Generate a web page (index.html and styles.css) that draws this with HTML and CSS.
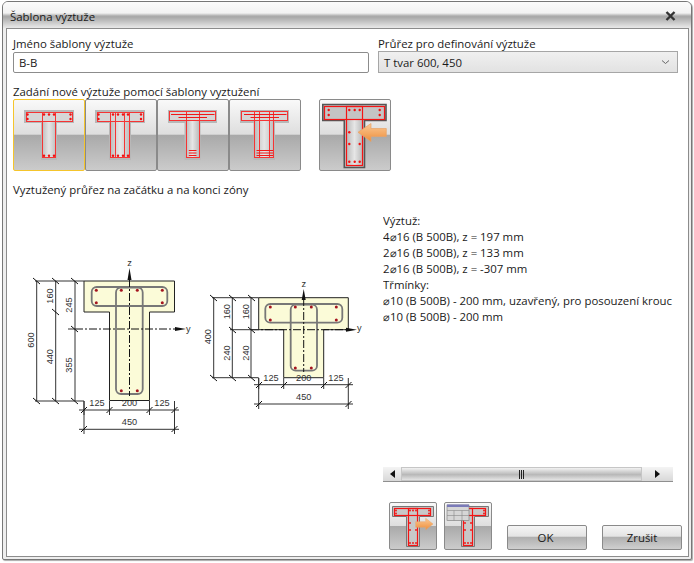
FILE: index.html
```html
<!DOCTYPE html>
<html lang="cs">
<head>
<meta charset="utf-8">
<title>Šablona výztuže</title>
<link rel="stylesheet" href="styles.css">
</head>
<body>
<svg class="defs" width="0" height="0" aria-hidden="true">
  <defs>
    <linearGradient id="web" x1="0" x2="1" y1="0" y2="0">
      <stop offset="0" stop-color="#bdbdbd"/><stop offset=".5" stop-color="#e6e6e6"/><stop offset="1" stop-color="#bdbdbd"/>
    </linearGradient>
    <linearGradient id="arrow" x1="0" x2="0" y1="0" y2="1">
      <stop offset="0" stop-color="#fbc995"/><stop offset="1" stop-color="#ee8f3c"/>
    </linearGradient>
  </defs>
</svg>
<div class="window">
  <header class="titlebar">
    <span class="title">Šablona výztuže</span>
    <svg class="close" width="11" height="10" viewBox="0 0 11 10"><path d="M1.5 1 9.5 9M9.5 1 1.5 9" stroke="#333" stroke-width="2.4" fill="none"/></svg>
  </header>
  <main class="panel">
    <div class="fields">
      <label class="field"><span class="label">Jméno šablony výztuže</span><span class="input">B-B</span></label>
      <label class="field"><span class="label">Průřez pro definování výztuže</span>
        <span class="select">T tvar 600, 450
          <svg width="9" height="6" viewBox="0 0 9 6"><path d="M1 1.5 4.5 4.5 8 1.5" stroke="#666" fill="none"/></svg>
        </span></label>
    </div>
    <div class="label new-label">Zadání nové výztuže pomocí šablony vyztužení</div>
    <div class="templates">
      <div class="group">
        <button class="icon big selected">
          <svg viewBox="0 0 72 72">
            <path class="halo" d="M11 11H61V24H44V61H28V24H11Z"/><rect class="flangefill" x="13" y="13" width="46" height="9"/><rect class="webfill" x="29" y="22" width="14" height="37"/>
            <g class="rebar"><rect x="13.500" y="13.500" width="46" height="9"/><rect x="29.500" y="13.500" width="13" height="45"/></g>
            <g class="dots"><circle cx="14.500" cy="15.500" r="1.200"/><circle cx="14.500" cy="20" r="1.200"/><circle cx="57.500" cy="15.500" r="1.200"/><circle cx="57.500" cy="20" r="1.200"/><circle cx="31" cy="15.500" r="1.200"/><circle cx="36" cy="15.500" r="1.200"/><circle cx="41" cy="15.500" r="1.200"/><circle cx="31" cy="56.700" r="1.200"/><circle cx="36" cy="56.700" r="1.200"/><circle cx="41" cy="56.700" r="1.200"/></g>
          </svg>
        </button>
        <button class="icon big">
          <svg viewBox="0 0 72 72">
            <path class="halo" d="M10 11H60V24H46V61H24V24H10Z"/><rect class="flangefill" x="12" y="13" width="46" height="9"/><rect class="webfill" x="25" y="22" width="20" height="37"/>
            <g class="rebar"><rect x="12.500" y="13.500" width="46" height="9"/><rect x="25.500" y="13.500" width="19" height="45"/><path d="M30.500 13.500V58.500M39.500 13.500V58.500"/></g>
            <g class="dots"><circle cx="13.500" cy="15.500" r="1.200"/><circle cx="13.500" cy="20" r="1.200"/><circle cx="56" cy="15.500" r="1.200"/><circle cx="56" cy="20" r="1.200"/><circle cx="28" cy="15.500" r="1.200"/><circle cx="33" cy="15.500" r="1.200"/><circle cx="38" cy="15.500" r="1.200"/><circle cx="43" cy="15.500" r="1.200"/><circle cx="28" cy="56.700" r="1.200"/><circle cx="33" cy="56.700" r="1.200"/><circle cx="38" cy="56.700" r="1.200"/><circle cx="43" cy="56.700" r="1.200"/></g>
          </svg>
        </button>
        <button class="icon big">
          <svg viewBox="0 0 72 72">
            <path class="halo" d="M11 11H60V24H43.500V61H27.500V24H11Z"/><rect class="flangefill" x="13" y="13" width="45" height="8"/><rect class="webfill" x="29" y="21" width="13" height="38"/>
            <g class="rebar"><rect x="12.500" y="12.500" width="46" height="9"/><rect x="29.500" y="12.500" width="13" height="46"/></g>
            <path class="bar" d="M14 15.500H57.500M21.500 18.500H50M31.800 51.500H39.500M31.800 54H39.500M31.800 56.500H39.500"/>
          </svg>
        </button>
        <button class="icon big">
          <svg viewBox="0 0 72 72">
            <path class="halo" d="M11 11H60V24H46V61H24.500V24H11Z"/><rect class="flangefill" x="13" y="13" width="45" height="8"/><rect class="webfill" x="25.700" y="21" width="19" height="38"/>
            <g class="rebar"><rect x="12.500" y="12.500" width="46" height="9"/><rect x="25.500" y="12.500" width="19" height="46"/><path d="M30.500 12.500V58.500M40.500 12.500V58.500"/></g>
            <path class="bar" d="M15 15.500H57.500M21.500 18.500H50M27.500 51.500H44M27.500 54H44M27.500 56.500H44"/>
          </svg>
        </button>
      </div>
      <button class="icon big">
        <svg viewBox="0 0 72 72">
          <path d="M3.800 5.500H67V21.500H45.500V68.500H25.300V21.500H3.800Z" fill="#c4c4c4" stroke="#555" stroke-width="1.600"/>
          <rect class="webfill" x="28" y="21" width="15" height="46"/>
          <g class="rebar solid"><rect x="5.500" y="7.500" width="60" height="13"/><rect x="27.500" y="7.500" width="16" height="59"/></g>
          <g class="dots"><circle cx="9.700" cy="11" r="1.200"/><circle cx="9.700" cy="16" r="1.200"/><circle cx="60.700" cy="11" r="1.200"/><circle cx="60.700" cy="16" r="1.200"/><circle cx="30.300" cy="11" r="1.200"/><circle cx="35.700" cy="11" r="1.200"/><circle cx="40.700" cy="11" r="1.200"/><circle cx="30.300" cy="33.300" r="1.200"/><circle cx="30.300" cy="45" r="1.200"/><circle cx="40.700" cy="45" r="1.200"/><circle cx="30.300" cy="62.700" r="1.200"/><circle cx="35.700" cy="62.700" r="1.200"/><circle cx="40.700" cy="62.700" r="1.200"/></g>
          <path d="M39 33.300 52 24.500V29.500H67.300V37.500H52V42.500Z" fill="url(#arrow)" stroke="#e8a468" stroke-width=".7"/>
        </svg>
      </button>
    </div>
    <div class="label section-label">Vyztužený průřez na začátku a na konci zóny</div>
    <div class="content">
      <svg class="drawing" width="354" height="240" viewBox="14 204 354 240">
        <!-- first section -->
        <path class="concrete" d="M84 281H174.500V312H149.500V400.500H109.500V312H84Z"/>
        <g class="stirrup"><rect x="91.700" y="287" width="75.600" height="19" rx="5"/><rect x="116" y="287.500" width="26.700" height="106.500" rx="5"/></g>
        <g class="rebar-dot"><circle cx="96.300" cy="290.300" r="1.500"/><circle cx="121.300" cy="290.300" r="1.500"/><circle cx="137.300" cy="290.300" r="1.500"/><circle cx="162.300" cy="290.300" r="1.500"/><circle cx="96.300" cy="302.700" r="1.500"/><circle cx="162.300" cy="302.700" r="1.500"/><circle cx="121.300" cy="390.700" r="1.500"/><circle cx="137.300" cy="390.700" r="1.500"/></g>
        <path class="axis" d="M75 329H175M129.500 279V396"/>
        <path class="arrowhead" d="M129.500 268 131.500 280H127.500ZM186 329 175 327V331Z"/>
        <text class="dim" x="129.500" y="266" text-anchor="middle">z</text>
        <text class="dim" x="186" y="332">y</text>
        <path class="line" d="M84 281H35M84 401H35M75 281V401M55.700 281V401M36.700 281V401M75 329H68M84 401V415M109.500 401V415M149.500 401V415M174.500 401V434M84 401V434M79 410H179M79 429.300H179"/>
        <path class="tick" d="M33 278 40 284M52 278 59 284M71 278 78 284M33 398 40 404M52 398 59 404M71 398 78 404M52 309 59 315M71 326 78 332M81 413 87 407M106.500 413 112.500 407M146.500 413 152.500 407M171.500 413 177.500 407M81 432 87 426M171.500 432 177.500 426"/>
        <g class="dim">
          <text transform="translate(33.500 340) rotate(-90)" text-anchor="middle">600</text>
          <text transform="translate(52.500 356.700) rotate(-90)" text-anchor="middle">440</text>
          <text transform="translate(52.500 296) rotate(-90)" text-anchor="middle">160</text>
          <text transform="translate(71.500 305) rotate(-90)" text-anchor="middle">245</text>
          <text transform="translate(71.500 365) rotate(-90)" text-anchor="middle">355</text>
          <text x="97" y="406" text-anchor="middle">125</text>
          <text x="129.500" y="406" text-anchor="middle">200</text>
          <text x="162" y="406" text-anchor="middle">125</text>
          <text x="129.500" y="425" text-anchor="middle">450</text>
        </g>
        <!-- second section -->
        <path class="concrete" d="M258.700 297.700H348.300V329.700H323.700V377.700H283.700V329.700H258.700Z"/>
        <g class="stirrup"><rect x="265.300" y="304" width="77" height="18.700" rx="5"/><rect x="290.700" y="304.700" width="26.300" height="66" rx="5"/></g>
        <g class="rebar-dot"><circle cx="270.300" cy="307" r="1.500"/><circle cx="295.300" cy="307" r="1.500"/><circle cx="311.300" cy="307" r="1.500"/><circle cx="336.300" cy="307" r="1.500"/><circle cx="270.300" cy="320" r="1.500"/><circle cx="336.300" cy="320" r="1.500"/><circle cx="295.300" cy="368" r="1.500"/><circle cx="311.300" cy="368" r="1.500"/></g>
        <path class="axis" d="M251 329.700H346M303.700 298V372"/>
        <path class="arrowhead" d="M303.700 289 305.700 300H301.700ZM357 329.700 346 327.700V331.700Z"/>
        <text class="dim" x="303.700" y="287" text-anchor="middle">z</text>
        <text class="dim" x="357" y="331">y</text>
        <path class="line" d="M258.700 297.700H212M258.700 377.700H212M251 297.700V377.700M232.300 297.700V377.700M213.700 297.700V377.700M258.700 329.700H230M258.700 378V389M283.700 378V389M323.700 378V389M348.300 378V409M258.700 378V409M254 384.700H353M254 404H353"/>
        <path class="tick" d="M210 295 217 301M229 295 236 301M248 295 255 301M210 375 217 381M229 375 236 381M248 375 255 381M229 327 236 333M248 327 255 333M256 388 262 382M281 388 287 382M321 388 327 382M345.500 388 351.500 382M256 407 262 401M345.500 407 351.500 401"/>
        <g class="dim">
          <text transform="translate(210.500 336.700) rotate(-90)" text-anchor="middle">400</text>
          <text transform="translate(229.500 311.700) rotate(-90)" text-anchor="middle">160</text>
          <text transform="translate(229.500 353) rotate(-90)" text-anchor="middle">240</text>
          <text transform="translate(248.500 311.700) rotate(-90)" text-anchor="middle">160</text>
          <text transform="translate(248.500 353) rotate(-90)" text-anchor="middle">240</text>
          <text x="271" y="381" text-anchor="middle">125</text>
          <text x="303.700" y="381" text-anchor="middle">200</text>
          <text x="336" y="381" text-anchor="middle">125</text>
          <text x="303.700" y="400" text-anchor="middle">450</text>
        </g>
      </svg>
      <div class="report">
        <div class="report-text">
          <div>Výztuž:</div>
          <div>4⌀16 (B 500B), z = 197 mm</div>
          <div>2⌀16 (B 500B), z = 133 mm</div>
          <div>2⌀16 (B 500B), z = -307 mm</div>
          <div>Třmínky:</div>
          <div>⌀10 (B 500B) - 200 mm, uzavřený, pro posouzení krouc</div>
          <div>⌀10 (B 500B) - 200 mm</div>
        </div>
        <div class="scrollbar">
          <span class="sb-btn"><svg width="5" height="8" viewBox="0 0 5 8"><path d="M5 0V8L0 4Z" fill="#111"/></svg></span>
          <span class="sb-thumb"><svg width="5" height="9" viewBox="0 0 5 9"><path d="M.5 0V9M2.500 0V9M4.500 0V9" stroke="#222"/></svg></span>
          <span class="sb-btn wide"><svg width="5" height="8" viewBox="0 0 5 8"><path d="M0 0V8L5 4Z" fill="#111"/></svg></span>
        </div>
      </div>
    </div>
    <footer class="actions">
      <button class="icon small">
        <svg viewBox="0 0 48 48">
          <path d="M3.500 4.500H44.500V14.500H30.500V44.500H17.500V14.500H3.500Z" fill="#c8c8c8" stroke="#777" stroke-width="1"/>
          <g class="rebar solid"><rect x="5.500" y="6.500" width="36" height="7"/><rect x="19.500" y="6.500" width="9" height="37"/></g>
          <g class="dots small-dots"><circle cx="7" cy="8.500" r=".9"/><circle cx="7" cy="11.500" r=".9"/><circle cx="40" cy="8.500" r=".9"/><circle cx="40" cy="11.500" r=".9"/><circle cx="21" cy="8.500" r=".9"/><circle cx="24" cy="8.500" r=".9"/><circle cx="27" cy="8.500" r=".9"/><circle cx="21" cy="21" r=".9"/><circle cx="21" cy="28" r=".9"/><circle cx="27" cy="28" r=".9"/><circle cx="21" cy="41" r=".9"/><circle cx="24" cy="41" r=".9"/><circle cx="27" cy="41" r=".9"/></g>
          <path d="M26.700 19.700H36.700V16.300L44 22 36.700 27.700V25.300H26.700Z" fill="url(#arrow)" stroke="#e8a468" stroke-width=".5"/>
        </svg>
      </button>
      <button class="icon small">
        <svg viewBox="0 0 48 48">
          <path d="M3.500 4.500H44.500V14.500H30.500V44.500H17.500V14.500H3.500Z" fill="#c8c8c8" stroke="#777" stroke-width="1"/>
          <g class="rebar solid"><rect x="5.500" y="6.500" width="36" height="7"/><rect x="19.500" y="6.500" width="9" height="37"/></g>
          <g class="dots small-dots"><circle cx="40" cy="8.500" r=".9"/><circle cx="40" cy="11.500" r=".9"/><circle cx="27" cy="21" r=".9"/><circle cx="21" cy="21" r=".9"/><circle cx="21" cy="28" r=".9"/><circle cx="27" cy="28" r=".9"/><circle cx="21" cy="41" r=".9"/><circle cx="24" cy="41" r=".9"/><circle cx="27" cy="41" r=".9"/></g>
          <rect x="3" y="3" width="22" height="15.500" fill="#d6d6d6" stroke="#777" stroke-width=".6"/>
          <path d="M3 8.500H25M3 13.500H25M10 8.500V18.500M18 8.500V18.500" stroke="#888" stroke-width=".6"/>
          <rect x="3" y="2.500" width="22" height="2.500" fill="#7a7ab8"/>
        </svg>
      </button>
      <button class="push ok">OK</button>
      <button class="push">Zrušit</button>
    </footer>
  </main>
</div>
</body>
</html>
```

FILE: styles.css
```css
* { box-sizing: border-box; }
html, body { margin: 0; height: 100%; }
body {
  width: 694px; height: 563px; overflow: hidden; background: #fff;
  font: 11.400px "Open Sans", "Noto Sans", sans-serif; color: #1a1a1a;
}
.defs { position: absolute; }
button { font: inherit; color: inherit; padding: 0; margin: 0; cursor: default; }
.window {
  margin: 1px 2px 0 2px; height: 559px; display: flex; flex-direction: column;
  border: 1px solid #777; border-radius: 6px 6px 2px 2px; overflow: hidden;
  background: #eeeeee; padding: 0 2px 2px 3px;
  box-shadow: 1px 1px 1px #aaa;
}
.titlebar {
  margin: 0 -2px 0 -3px; padding: 0 15px 0 7px; height: 26px; flex: none;
  display: flex; justify-content: space-between; align-items: center;
  background: linear-gradient(#fbfbfb 0, #f2f2f2 11px, #ababab 14px, #a8a8a8 15px, #dedede 24px, #e9e9e9 26px);
}
.title { padding-top: 3px; }
.close { margin-top: 2px; }
.panel {
  flex: 1; min-height: 0; background: #fff; border: 1px solid #8c8c8c;
  padding: 7px 6px 6px 6px; display: flex; flex-direction: column;
}
.fields { display: grid; grid-template-columns: 356px 300px; column-gap: 9px; }
.field { display: flex; flex-direction: column; }
.label { line-height: 16px; height: 16px; display: block; }
.input {
  height: 21px; border: 1px solid #8c8c8c; border-radius: 2px; padding: 0 5px; line-height: 19px;
}
.select {
  height: 22px; border: 1px solid #a6a6a6; padding: 0 7px 0 5px; line-height: 19px; margin-top: -1px;
  background: linear-gradient(#f0f0f0, #e2e2e2);
  display: flex; justify-content: space-between; align-items: center;
}
.new-label { margin-top: 11px; }
.templates { display: flex; gap: 18px; margin-top: -1px; }
.group { display: flex; }
.icon {
  border: 1px solid #8a8a8a; border-radius: 2px; display: block;
  background: linear-gradient(#f9f9f9 0, #dedede 49%, #a9a9a9 50%, #cbcbcb 100%);
}
.icon svg { display: block; margin: -1px; width: calc(100% + 2px); height: calc(100% + 2px); }
.big { width: 72px; height: 72px; }
.selected { border-color: #f5c52c; }
.small { width: 48px; height: 48px; }
.halo { fill: #b8b8b8; }
.flangefill { fill: #d6d6d6; }
.webfill { fill: url(#web); }
.rebar rect, .rebar path { fill: none; stroke: #f53434; stroke-width: 1; }
.rebar.solid rect { stroke: #f51414; stroke-width: 1.200; }
.dots circle { fill: #f01010; }
.bar { stroke: #f01818; stroke-width: 1.200; fill: none; }
.section-label { margin-top: 11px; }
.content { display: flex; margin-left: 1px; flex: 1; min-height: 0; }
.drawing { flex: none; margin-top: 6px; }
.report { margin-left: 15px; width: 290px; display: flex; flex-direction: column; }
.report-text { margin-top: 15px; flex: 1; line-height: 16px; white-space: nowrap; overflow: hidden; }
.scrollbar {
  height: 15px; display: flex; align-items: center; flex: none; margin-bottom: 20px;
  background: linear-gradient(#f4f4f4, #d8d8d8); border-bottom: 1px solid #8f8f8f;
}
.sb-btn { width: 18px; display: flex; justify-content: center; }
.sb-btn.wide { width: 31px; }
.sb-thumb {
  flex: 1; height: 14px; display: flex; align-items: center; justify-content: center;
  background: linear-gradient(#f2f2f2, #b8b8b8 55%, #e4e4e4); border: 1px solid #c6c6c6;
}
.concrete { fill: #fbfbd8; stroke: #222; stroke-width: 1; }
.stirrup rect { fill: none; stroke: #777; stroke-width: 1.800; }
.rebar-dot circle { fill: #a5151f; }
.axis { stroke: #111; stroke-width: 1; stroke-dasharray: 8 2 2 2; fill: none; }
.arrowhead { fill: #111; }
.line { stroke: #333; stroke-width: 1; fill: none; }
.tick { stroke: #111; stroke-width: 1; fill: none; }
.dim, .dim text { font: 9.200px "Liberation Sans", sans-serif; fill: #333; }
.actions { display: flex; flex: none; height: 48px; align-items: flex-end; margin-left: 376px; }
.actions .icon + .icon { margin-left: 7px; }
.push {
  width: 80px; height: 25px; border: 1px solid #8a8a8a; border-radius: 2px; flex: none;
  background: linear-gradient(#f5f5f5 0, #e4e4e4 44%, #b0b0b0 50%, #cfcfcf 100%);
  margin-left: 15px;
}
.ok { padding-right: 3px; }
```
